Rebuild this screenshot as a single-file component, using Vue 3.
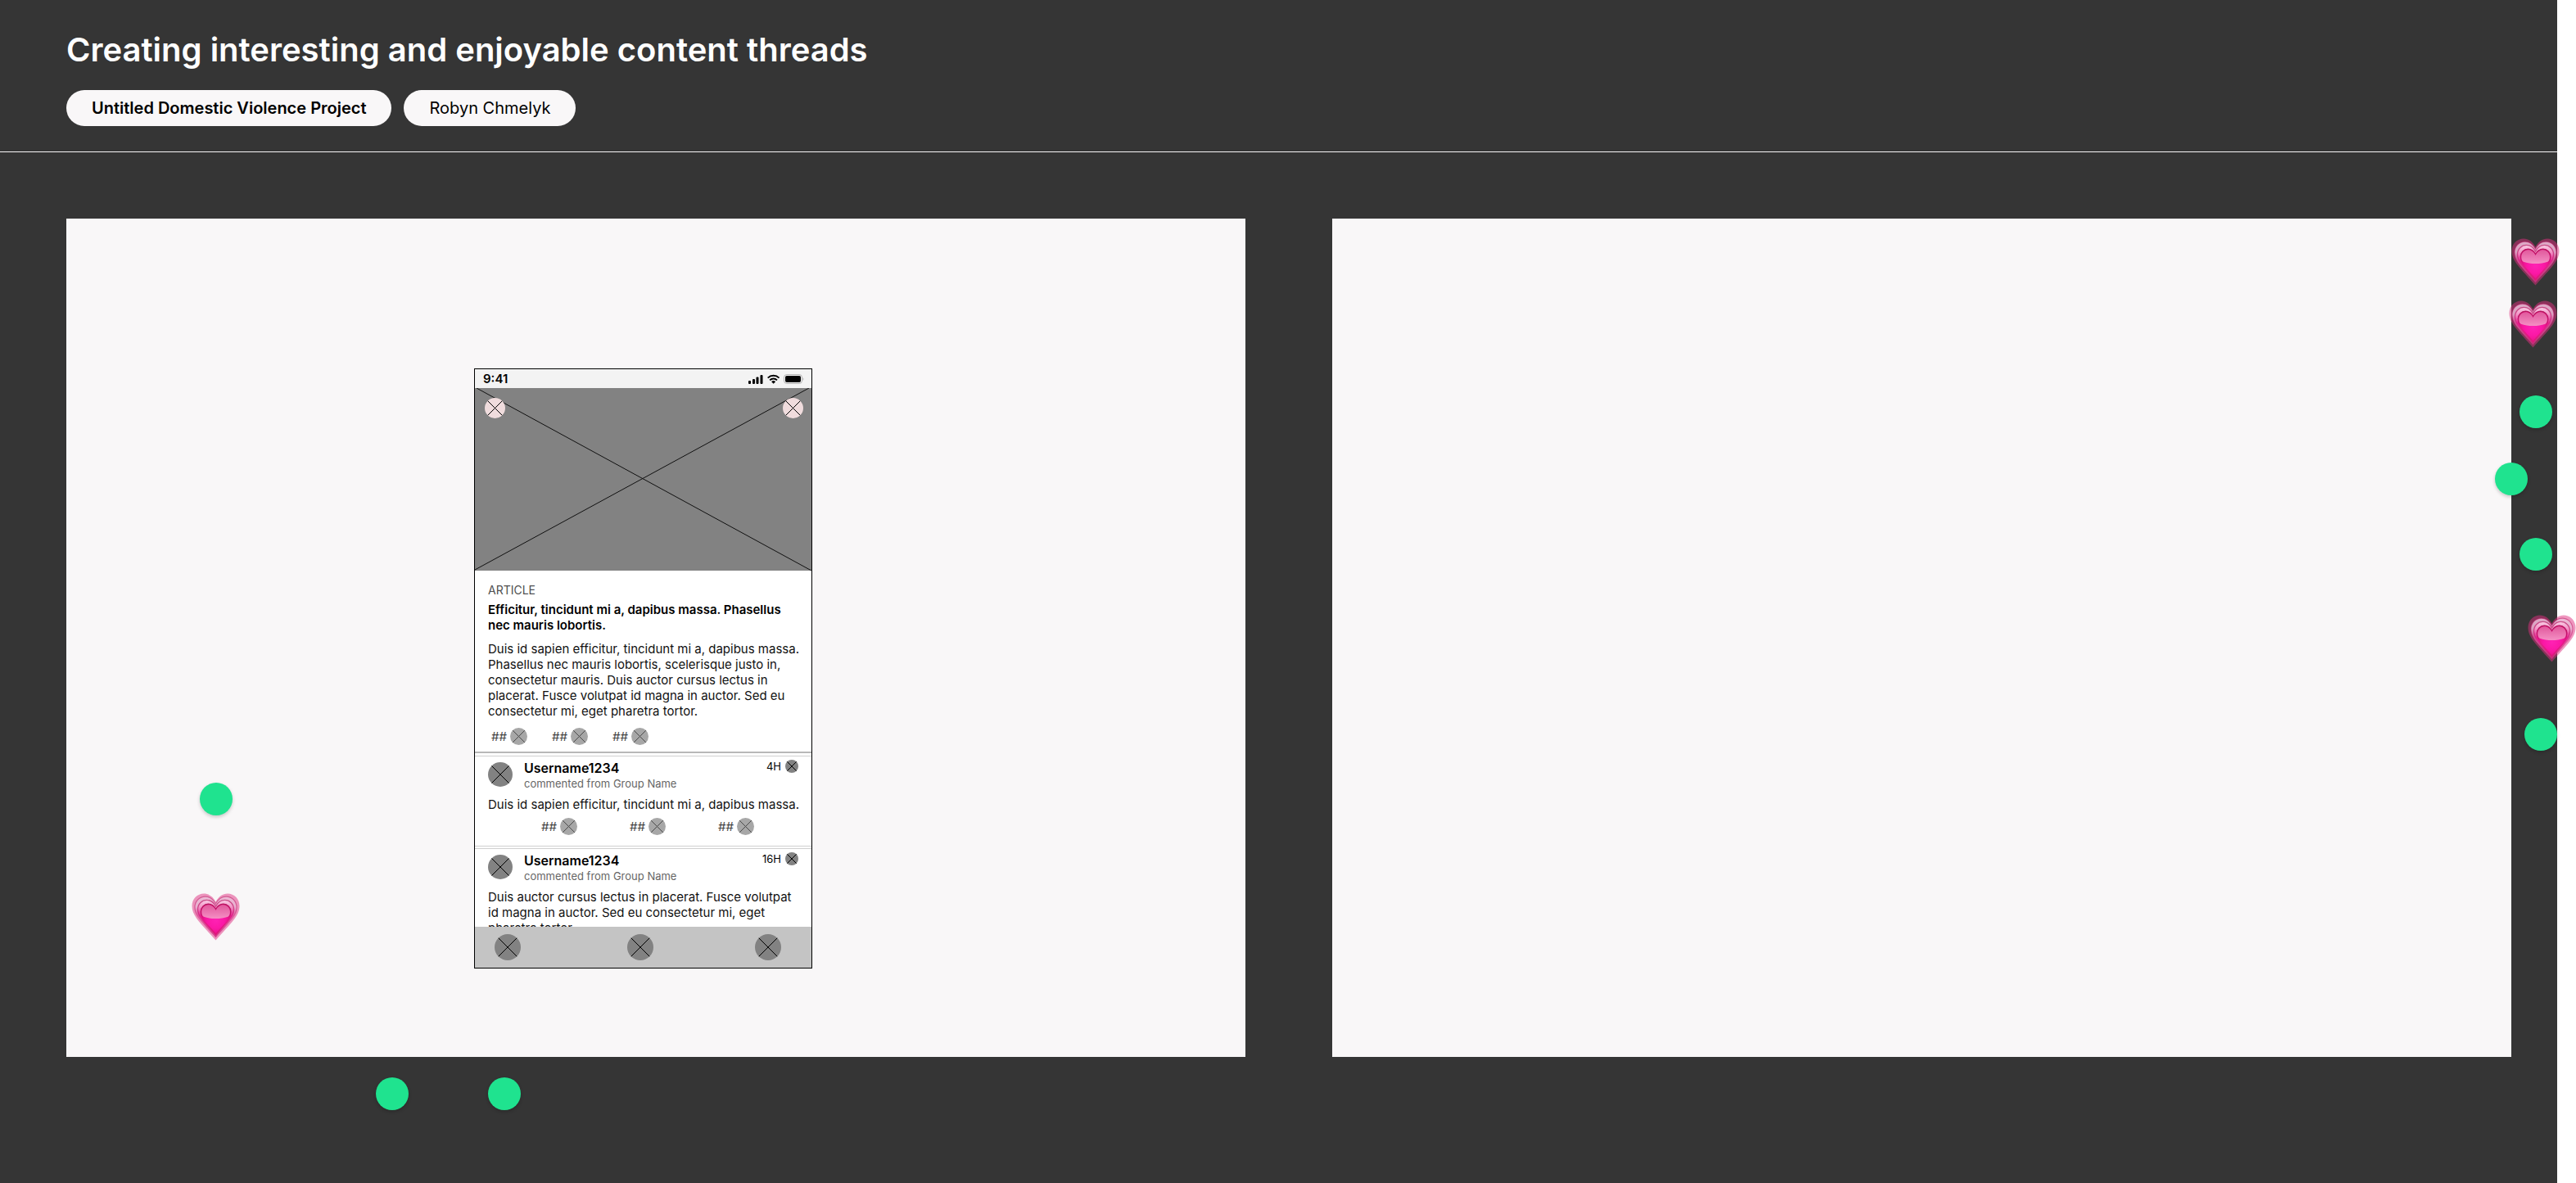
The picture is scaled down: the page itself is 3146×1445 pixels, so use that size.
<script setup>
const comments = [
  {
    user: 'Username1234',
    source: 'commented from Group Name',
    age: '4H',
    lines: ['Duis id sapien efficitur, tincidunt mi a, dapibus massa.'],
    counts: 3
  },
  {
    user: 'Username1234',
    source: 'commented from Group Name',
    age: '16H',
    lines: [
      'Duis auctor cursus lectus in placerat. Fusce volutpat',
      'id magna in auctor. Sed eu consectetur mi, eget',
      'pharetra tortor.'
    ],
    counts: 0
  }
]

const article = [
  'Duis id sapien efficitur, tincidunt mi a, dapibus massa.',
  'Phasellus nec mauris lobortis, scelerisque justo in,',
  'consectetur mauris. Duis auctor cursus lectus in',
  'placerat. Fusce volutpat id magna in auctor. Sed eu',
  'consectetur mi, eget pharetra tortor.'
]

const px = (o) => Object.fromEntries(Object.entries(o).map(([k, v]) => [k, v + 'px']))

// Vote stickers, placed freely over the board
const dots = [
  { left: 244, top: 956 },
  { left: 459, top: 1316 },
  { left: 596, top: 1316 },
  { right: 6, top: 483 },
  { right: 36, top: 565 },
  { right: 6, top: 657 },
  { right: 0, top: 877 }
].map(px)

const hearts = [
  { left: 234, top: 1091 },
  { right: -3, top: 291 },
  { right: 0, top: 367 },
  { right: -23, top: 751 }
].map(px)
</script>

<template>
  <div class="page">
    <svg class="defs" aria-hidden="true">
      <defs>
        <linearGradient id="g-mid" x1="0" y1="0" x2="0" y2="1">
          <stop offset="0" stop-color="#ecc0da" />
          <stop offset=".25" stop-color="#e8b4d2" />
          <stop offset=".45" stop-color="#dd5a9e" />
          <stop offset="1" stop-color="#cf2b7f" />
        </linearGradient>
        <linearGradient id="g-in" x1="0" y1="0" x2="0" y2="1">
          <stop offset="0" stop-color="#f9cfe6" />
          <stop offset=".2" stop-color="#f294c6" />
          <stop offset=".45" stop-color="#e8208f" />
          <stop offset="1" stop-color="#dc1578" />
        </linearGradient>
        <radialGradient id="g-core" cx=".5" cy=".55" r=".55">
          <stop offset="0" stop-color="#ff22b4" />
          <stop offset=".5" stop-color="#fb18a6" />
          <stop offset="1" stop-color="#e4127f" />
        </radialGradient>
        <linearGradient id="g-shine" x1="0" y1="0" x2="0" y2="1">
          <stop offset="0" stop-color="#e0599c" />
          <stop offset="1" stop-color="#f58fc4" />
        </linearGradient>
        <linearGradient id="g-edge" x1="0" y1="0" x2="0" y2="1">
          <stop offset="0" stop-color="#b8155f" />
          <stop offset=".35" stop-color="#c4146c" />
          <stop offset=".6" stop-color="#e3128a" stop-opacity="0" />
        </linearGradient>
        <path id="heart-shape" d="M29.500 10.500C26 4 21 .5 15 .5 7 .5.5 7 .5 15.500.5 28 11 36.500 29.500 57.500 48 36.500 58.500 28 58.500 15.500 58.500 7 52 .5 44 .5 38 .5 33 4 29.500 10.500Z" />
        <symbol id="heart" viewBox="0 0 59 58">
          <use href="#heart-shape" fill="#e0307f" fill-opacity=".5" />
          <g transform="translate(3.500 3.700) scale(.88)">
            <use href="#heart-shape" fill="url(#g-mid)" fill-opacity=".85" stroke="url(#g-edge)" stroke-opacity=".5" stroke-width="1.400" />
          </g>
          <g transform="translate(7.100 8) scale(.76)">
            <use href="#heart-shape" fill="url(#g-in)" stroke="url(#g-edge)" stroke-opacity=".65" stroke-width="1.800" />
          </g>
          <g transform="translate(11 13) scale(.63)">
            <use href="#heart-shape" fill="url(#g-core)" stroke="url(#g-edge)" stroke-width="2.200" />
            <path d="M29.500 12.500C26 6 21 2 15 2 8 2 2 8 2 15.500 2 20 3 23 6 25 20 30 39 30 53 25 56 23 57 20 57 15.500 57 8 51 2 44 2 38 2 33 6 29.500 12.500Z" fill="url(#g-shine)" />
          </g>
        </symbol>
        <symbol id="cross" viewBox="0 0 100 100">
          <circle cx="50" cy="50" r="50" fill="currentColor" />
          <path d="M15 15 85 85M85 15 15 85" stroke="#000" stroke-width="1" vector-effect="non-scaling-stroke" />
        </symbol>
      </defs>
    </svg>

    <header class="header">
      <h1>Creating interesting and enjoyable content threads</h1>
      <div class="pills">
        <span class="pill strong">Untitled Domestic Violence Project</span>
        <span class="pill">Robyn Chmelyk</span>
      </div>
    </header>

    <main class="board">
      <section class="frame">
        <article class="phone">
          <div class="status">
            <span class="clock">9:41</span>
            <svg class="signals" viewBox="0 0 70 14" aria-hidden="true">
              <rect x="2" y="9" width="3" height="4" rx="1" />
              <rect x="7" y="7" width="3" height="6" rx="1" />
              <rect x="11.500" y="4.500" width="3" height="8.500" rx="1" />
              <rect x="16.500" y="2" width="3" height="11" rx="1" />
              <g fill="none" stroke="#000" stroke-width="2">
                <path d="M25.700 5.600a10 10 0 0 1 13.800 0" />
                <path d="M28.200 8.400a6.300 6.300 0 0 1 8.800 0" />
              </g>
              <path d="M30.100 10.200a3.500 3.500 0 0 1 5 0L32.600 12.800Z" />
              <rect x="45.500" y="1.500" width="22" height="11" rx="3.500" fill="none" stroke="#b5b5b5" />
              <rect x="47" y="3" width="19" height="8" rx="2" />
              <path d="M68.500 5q2 2 0 4Z" fill="#b5b5b5" />
            </svg>
          </div>

          <div class="hero">
            <svg class="hero-lines" viewBox="0 0 411 223" preserveAspectRatio="none" aria-hidden="true">
              <path d="M2 0 411 223M0 222 408 0" stroke="#111" fill="none" vector-effect="non-scaling-stroke" />
            </svg>
            <button class="round" aria-label="Back"><svg><use href="#cross" /></svg></button>
            <button class="round" aria-label="More"><svg><use href="#cross" /></svg></button>
          </div>

          <div class="article">
            <p class="kicker">ARTICLE</p>
            <h2>Efficitur, tincidunt mi a, dapibus massa. Phasellus<br />nec mauris lobortis.</h2>
            <p class="text"><template v-for="(l, i) in article" :key="i">{{ l }}<br /></template></p>
            <div class="counts">
              <button v-for="n in 3" :key="n" class="count">##<svg><use href="#cross" /></svg></button>
            </div>
          </div>

          <section v-for="(c, i) in comments" :key="i" class="comment">
            <div class="who">
              <svg class="avatar"><use href="#cross" /></svg>
              <div class="names">
                <h3>{{ c.user }}</h3>
                <p>{{ c.source }}</p>
              </div>
              <span class="age">{{ c.age }}<svg><use href="#cross" /></svg></span>
            </div>
            <p class="text"><template v-for="(l, j) in c.lines" :key="j">{{ l }}<br /></template></p>
            <div v-if="c.counts" class="counts wide">
              <button v-for="n in c.counts" :key="n" class="count">##<svg><use href="#cross" /></svg></button>
            </div>
          </section>

          <nav class="tabs">
            <button aria-label="Home"><svg><use href="#cross" /></svg></button>
            <button aria-label="Search"><svg><use href="#cross" /></svg></button>
            <button aria-label="Profile"><svg><use href="#cross" /></svg></button>
          </nav>
        </article>
      </section>
      <section class="frame"></section>
    </main>

    <span v-for="(d, i) in dots" :key="'d' + i" class="dot" :style="d"></span>
    <svg v-for="(h, i) in hearts" :key="'h' + i" class="heart" :style="h"><use href="#heart" /></svg>
  </div>
</template>

<style>
body {
  margin: 0;
  background: #fff;
  overflow-x: hidden;
}
</style>

<style scoped>
.page {
  position: relative;
  margin-right: 23px;
  background: #353535;
  font-family: Inter, "Liberation Sans", sans-serif;
}
.defs {
  position: absolute;
  width: 0;
  height: 0;
}
h1, h2, h3, p {
  margin: 0;
}
svg {
  display: block;
}
button {
  padding: 0;
  border: 0;
  background: none;
  font: inherit;
  color: inherit;
}
.header {
  padding: 37px 81px 31px;
  border-bottom: 1px solid #f9f7f8;
}
h1 {
  color: #fff;
  font-size: 40px;
  font-weight: 600;
  line-height: 48px;
}
.pills {
  display: flex;
  gap: 15px;
  margin-top: 25px;
}
.pill {
  padding: 0 31px;
  border-radius: 22px;
  background: #f9f7f8;
  color: #000;
  font-size: 20px;
  line-height: 44px;
}
.pill.strong {
  font-weight: 600;
}
.board {
  display: flex;
  gap: 106px;
  padding: 81px 56px 154px 81px;
}
.frame {
  box-sizing: border-box;
  flex: 1;
  min-height: 1024px;
  padding: 183px 0 0 498px;
  background: #f9f7f8;
}
.phone {
  box-sizing: border-box;
  display: flex;
  flex-direction: column;
  width: 413px;
  height: 733px;
  border: 1px solid #000;
  background: #fff;
  overflow: hidden;
  white-space: nowrap;
}
.status {
  display: flex;
  flex: none;
  align-items: center;
  justify-content: space-between;
  height: 23px;
  padding: 0 9px 0 10px;
  background: #f3f3f3;
}
.clock {
  font-size: 15px;
  font-weight: 600;
}
.signals {
  width: 70px;
  height: 14px;
}
.hero {
  position: relative;
  display: flex;
  flex: none;
  justify-content: space-between;
  box-sizing: border-box;
  height: 223px;
  padding: 12px 10px 0 12px;
  background: #828282;
}
.hero-lines {
  position: absolute;
  inset: 0;
  width: 100%;
  height: 100%;
}
.round {
  position: relative;
  width: 25px;
  height: 25px;
  color: #f0dcdd;
}
.round svg {
  width: 25px;
  height: 25px;
}
.article {
  flex: none;
  box-sizing: border-box;
  height: 223px;
  padding: 14px 16px 0;
  border-bottom: 2px solid #b8b8b8;
}
.kicker {
  color: #4f4f4f;
  font-size: 14px;
  line-height: 19px;
}
h2 {
  margin-top: 5px;
  font-size: 15px;
  font-weight: 600;
  line-height: 19px;
}
.text {
  color: #111;
  font-size: 15px;
  line-height: 19px;
}
.article .text {
  margin-top: 10px;
}
.counts {
  display: flex;
  gap: 30px;
  margin: 11px 0 0 4px;
}
.count {
  display: flex;
  align-items: center;
  gap: 4px;
  color: #444;
  font-size: 15px;
  line-height: 21px;
}
.count svg {
  width: 21px;
  height: 21px;
  color: #828282;
  opacity: .7;
}
.comment {
  flex: none;
  box-sizing: border-box;
  height: 111px;
  margin-top: 3px;
  padding: 4px 16px 0;
  border-top: 1px solid #d0d0d0;
  border-bottom: 1px solid #d0d0d0;
}
.comment + .comment {
  flex: 1;
  min-height: 0;
  margin-top: 2px;
  border-bottom: 0;
  overflow: hidden;
}
.who {
  display: flex;
}
.avatar {
  width: 30px;
  height: 30px;
  margin-top: 3px;
  color: #828282;
}
.names {
  flex: 1;
  margin-left: 14px;
}
h3 {
  font-size: 16px;
  font-weight: 600;
  line-height: 20px;
}
.names p {
  color: #666;
  font-size: 13px;
  line-height: 18px;
}
.age {
  display: flex;
  gap: 5px;
  height: 16px;
  font-size: 13px;
  line-height: 16px;
}
.age svg {
  width: 16px;
  height: 16px;
  color: #828282;
}
.comment .text {
  margin-top: 7px;
}
.counts.wide {
  gap: 64px;
  margin: 7px 0 0 65px;
}
.tabs {
  display: grid;
  flex: none;
  grid-template-columns: 162px 156px 32px;
  justify-items: start;
  align-items: center;
  height: 50px;
  padding: 0 24px;
  background: #c4c4c4;
}
.tabs svg {
  width: 32px;
  height: 32px;
  color: #828282;
}
.dot {
  position: absolute;
  width: 40px;
  height: 40px;
  border-radius: 50%;
  background: #1fe38f;
  box-shadow: 0 2px 4px rgba(0, 0, 0, .2);
}
.heart {
  position: absolute;
  width: 59px;
  height: 58px;
}
</style>
